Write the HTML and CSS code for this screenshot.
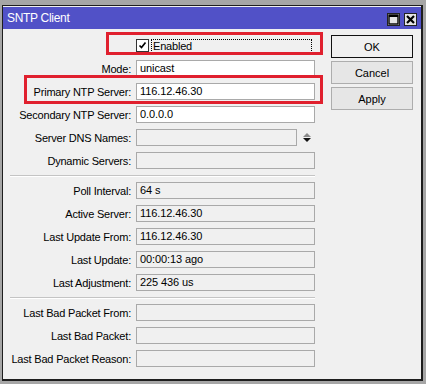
FILE: index.html
```html
<!DOCTYPE html>
<html>
<head>
<meta charset="utf-8">
<link rel="stylesheet" href="styles.css">
</head>
<body>
<div class="window">
  <div class="titlebar">
    <span class="title">SNTP Client</span>
    <div class="tb-btns">
      <span class="tb-btn"><svg width="11" height="11" viewBox="0 0 11 11"><rect x="1" y="1" width="9" height="9" fill="none" stroke="#000" stroke-width="1.4"/><rect x="1" y="1" width="9" height="2" fill="#000"/></svg></span>
      <span class="tb-btn"><svg width="11" height="11" viewBox="0 0 11 11"><path d="M2 2 L9 9 M9 2 L2 9" stroke="#000" stroke-width="2.2"/></svg></span>
    </div>
  </div>
  <div class="body">
    <div class="form">
      <div class="row">
        <span class="label"></span>
        <div class="check-wrap">
          <span class="checkbox"><svg width="9" height="9" viewBox="0 0 9 9"><path d="M1.5 4.5 L3.5 6.5 L7.5 1.5" fill="none" stroke="#000" stroke-width="1.7"/></svg></span>
          <span class="focus">Enabled</span>
        </div>
        <span class="mark mark-enabled"></span>
      </div>
      <div class="row"><span class="label">Mode:</span><span class="field white">unicast</span></div>
      <div class="row"><span class="label">Primary NTP Server:</span><span class="field white">116.12.46.30</span><span class="mark mark-primary"></span></div>
      <div class="row"><span class="label">Secondary NTP Server:</span><span class="field white">0.0.0.0</span></div>
      <div class="row"><span class="label">Server DNS Names:</span>
        <div class="dns-wrap"><span class="field ro dns"></span>
          <span class="spin"><span class="up"></span><span class="down"></span></span>
        </div>
      </div>
      <div class="row"><span class="label">Dynamic Servers:</span><span class="field ro"></span></div>
      <div class="sep"></div>
      <div class="row"><span class="label">Poll Interval:</span><span class="field ro">64 s</span></div>
      <div class="row"><span class="label">Active Server:</span><span class="field ro">116.12.46.30</span></div>
      <div class="row"><span class="label">Last Update From:</span><span class="field ro">116.12.46.30</span></div>
      <div class="row"><span class="label">Last Update:</span><span class="field ro">00:00:13 ago</span></div>
      <div class="row"><span class="label">Last Adjustment:</span><span class="field ro">225 436 us</span></div>
      <div class="sep"></div>
      <div class="row"><span class="label">Last Bad Packet From:</span><span class="field ro"></span></div>
      <div class="row"><span class="label">Last Bad Packet:</span><span class="field ro"></span></div>
      <div class="row"><span class="label">Last Bad Packet Reason:</span><span class="field ro"></span></div>
    </div>
    <div class="buttons">
      <span class="btn default">OK</span>
      <span class="btn">Cancel</span>
      <span class="btn">Apply</span>
    </div>
  </div>
</div>
</body>
</html>
```

FILE: styles.css
```css
html, body {
  margin: 0;
  padding: 0;
  background: #a6a6a6;
  width: 426px;
  height: 384px;
  overflow: hidden;
  font-family: "Liberation Sans", Arial, sans-serif;
  font-size: 11px;
  color: #000;
}
.window {
  margin: 5px 0 0 2px;
  width: 418px;
  height: 373px;
  border-left: 1px solid #1e1e1e;
  border-top: 1px solid #1e1e1e;
  border-right: 2px solid #1e1e1e;
  border-bottom: 2px solid #1e1e1e;
  background: #f0f0f0;
  display: flex;
  flex-direction: column;
}
.titlebar {
  height: 22px;
  margin-top: 1px;
  background: #5151c7;
  display: flex;
  align-items: center;
  justify-content: space-between;
  padding: 0 4px 0 4px;
}
.title {
  color: #fff;
  font-size: 12px;
  letter-spacing: -0.3px;
}
.tb-btns {
  display: flex;
  gap: 4px;
  margin-top: 3px;
}
.tb-btn {
  width: 11px;
  height: 11px;
  border: 1px solid #222;
  background: #e4e4e4;
  display: flex;
  align-items: center;
  justify-content: center;
}
.tb-btn svg { display: block; }
.body {
  flex: 1;
  display: flex;
}
.form {
  width: 328px;
  display: flex;
  flex-direction: column;
  gap: 6px;
  padding-top: 8px;
}
.row {
  position: relative;
  display: grid;
  grid-template-columns: 128px 179px;
  column-gap: 5px;
  height: 17px;
  align-items: center;
}
.label {
  text-align: right;
  letter-spacing: -0.2px;
  white-space: nowrap;
}
.field {
  box-sizing: border-box;
  height: 17px;
  border: 1px solid #a9a9a9;
  padding-left: 3px;
  line-height: 15px;
  letter-spacing: -0.1px;
  white-space: nowrap;
}
.field.white {
  background: #fff;
}
.field.ro {
  background: #f0f0f0;
}
.check-wrap {
  display: flex;
  align-items: center;
  height: 17px;
}
.checkbox {
  box-sizing: border-box;
  width: 13px;
  height: 13px;
  border: 1px solid #333;
  background: #fff;
  display: flex;
  align-items: center;
  justify-content: center;
}
.focus {
  margin-left: 2px;
  flex: 1;
  height: 14px;
  margin-right: 3px;
  box-sizing: border-box;
  border: 1px dotted #000;
  line-height: 12px;
  padding-left: 1px;
  letter-spacing: -0.2px;
}
.dns-wrap {
  display: flex;
  align-items: center;
  height: 17px;
}
.dns {
  width: 161px;
}
.spin {
  margin-left: 6px;
  display: flex;
  flex-direction: column;
  gap: 1px;
}
.up {
  width: 0;
  height: 0;
  border-left: 4px solid transparent;
  border-right: 4px solid transparent;
  border-bottom: 4px solid #8a8a8a;
}
.down {
  width: 0;
  height: 0;
  border-left: 4px solid transparent;
  border-right: 4px solid transparent;
  border-top: 4px solid #111;
}
.sep {
  height: 1px;
  margin-left: 7px;
  width: 305px;
  background: #c4c4c4;
  box-shadow: 0 1px 0 #fff;
}
.mark {
  position: absolute;
  box-sizing: border-box;
  border: 3px solid #e0202e;
}
.mark-enabled {
  left: 103px;
  top: -5px;
  width: 217px;
  height: 23px;
}
.mark-primary {
  left: 21px;
  top: -8px;
  width: 299px;
  height: 29px;
}
.buttons {
  display: flex;
  flex-direction: column;
  gap: 3px;
  padding-top: 6px;
}
.btn {
  box-sizing: border-box;
  width: 82px;
  height: 23px;
  border: 1px solid #adadad;
  background: #e6e6e6;
  display: flex;
  align-items: center;
  justify-content: center;
  font-size: 11px;
}
.btn.default {
  border: 1px solid #111;
  background: #f0f0f0;
}
```
